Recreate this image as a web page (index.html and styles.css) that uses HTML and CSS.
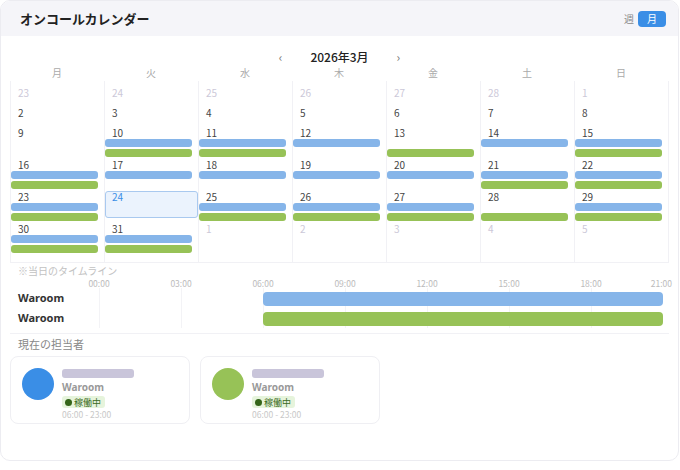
FILE: index.html
```html
<!DOCTYPE html>
<html lang="ja">
<head>
    <meta charset="UTF-8">
    <meta name="viewport" content="width=device-width, initial-scale=1.0">
    <title>オンコールカレンダー</title>
    <link rel="stylesheet" href="styles.css">
</head>
<body>
    <div class="panel">
        <div class="cabecera">
            <h1 class="titulo">オンコールカレンダー</h1>
            <div class="vista">
                <span class="vista-op">週</span>
                <span class="vista-op activa">月</span>
            </div>
        </div>

        <div class="mes-nav">
            <span class="flecha">‹</span>
            <span class="mes">2026年3月</span>
            <span class="flecha">›</span>
        </div>

        <div class="dias-semana">
            <span>月</span><span>火</span><span>水</span><span>木</span><span>金</span><span>土</span><span>日</span>
        </div>

        <div class="semanas">
            <div class="semana">
                <div class="dia fuera"><span class="num">23</span></div>
                <div class="dia fuera"><span class="num">24</span></div>
                <div class="dia fuera"><span class="num">25</span></div>
                <div class="dia fuera"><span class="num">26</span></div>
                <div class="dia fuera"><span class="num">27</span></div>
                <div class="dia fuera"><span class="num">28</span></div>
                <div class="dia fuera"><span class="num">1</span></div>
            </div>
            <div class="semana">
                <div class="dia"><span class="num">2</span></div>
                <div class="dia"><span class="num">3</span></div>
                <div class="dia"><span class="num">4</span></div>
                <div class="dia"><span class="num">5</span></div>
                <div class="dia"><span class="num">6</span></div>
                <div class="dia"><span class="num">7</span></div>
                <div class="dia"><span class="num">8</span></div>
            </div>
            <div class="semana">
                <div class="dia"><span class="num">9</span></div>
                <div class="dia"><span class="num">10</span><i class="barra azul"></i><i class="barra verde"></i></div>
                <div class="dia"><span class="num">11</span><i class="barra azul"></i><i class="barra verde"></i></div>
                <div class="dia"><span class="num">12</span><i class="barra azul"></i></div>
                <div class="dia"><span class="num">13</span><i class="barra vacia"></i><i class="barra verde"></i></div>
                <div class="dia"><span class="num">14</span><i class="barra azul"></i></div>
                <div class="dia"><span class="num">15</span><i class="barra azul"></i><i class="barra verde"></i></div>
            </div>
            <div class="semana">
                <div class="dia"><span class="num">16</span><i class="barra azul"></i><i class="barra verde"></i></div>
                <div class="dia"><span class="num">17</span><i class="barra azul"></i></div>
                <div class="dia"><span class="num">18</span><i class="barra azul"></i></div>
                <div class="dia"><span class="num">19</span><i class="barra azul"></i></div>
                <div class="dia"><span class="num">20</span><i class="barra azul"></i></div>
                <div class="dia"><span class="num">21</span><i class="barra azul"></i><i class="barra verde"></i></div>
                <div class="dia"><span class="num">22</span><i class="barra azul"></i><i class="barra verde"></i></div>
            </div>
            <div class="semana">
                <div class="dia"><span class="num">23</span><i class="barra azul"></i><i class="barra verde"></i></div>
                <div class="dia hoy"><span class="num">24</span></div>
                <div class="dia"><span class="num">25</span><i class="barra azul"></i><i class="barra verde"></i></div>
                <div class="dia"><span class="num">26</span><i class="barra azul"></i><i class="barra verde"></i></div>
                <div class="dia"><span class="num">27</span><i class="barra azul"></i><i class="barra verde"></i></div>
                <div class="dia"><span class="num">28</span><i class="barra vacia"></i><i class="barra verde"></i></div>
                <div class="dia"><span class="num">29</span><i class="barra azul"></i><i class="barra verde"></i></div>
            </div>
            <div class="semana">
                <div class="dia"><span class="num">30</span><i class="barra azul"></i><i class="barra verde"></i></div>
                <div class="dia"><span class="num">31</span><i class="barra azul"></i><i class="barra verde"></i></div>
                <div class="dia fuera"><span class="num">1</span></div>
                <div class="dia fuera"><span class="num">2</span></div>
                <div class="dia fuera"><span class="num">3</span></div>
                <div class="dia fuera"><span class="num">4</span></div>
                <div class="dia fuera"><span class="num">5</span></div>
            </div>
        </div>

        <div class="linea-tiempo">
            <div class="nota">※当日のタイムライン</div>
            <div class="fila eje">
                <div class="nombre"></div>
                <div class="pista">
                    <span class="hora" style="left: 0px">00:00</span>
                    <span class="hora" style="left: 82px">03:00</span>
                    <span class="hora" style="left: 164px">06:00</span>
                    <span class="hora" style="left: 246px">09:00</span>
                    <span class="hora" style="left: 328px">12:00</span>
                    <span class="hora" style="left: 410px">15:00</span>
                    <span class="hora" style="left: 492px">18:00</span>
                    <span class="hora fin" style="left: 573px">21:00</span>
                </div>
            </div>
            <div class="fila">
                <div class="nombre">Waroom</div>
                <div class="pista"><i class="turno azul" style="left: 164px; width: 400px"></i></div>
            </div>
            <div class="fila">
                <div class="nombre">Waroom</div>
                <div class="pista"><i class="turno verde" style="left: 164px; width: 400px"></i></div>
            </div>
        </div>

        <div class="responsables">
            <div class="subtitulo">現在の担当者</div>
            <div class="tarjetas">
                <div class="tarjeta">
                    <span class="avatar azul-fuerte"></span>
                    <div class="info">
                        <span class="oculto"></span>
                        <span class="equipo">Waroom</span>
                        <span class="estado"><i class="punto"></i>稼働中</span>
                        <span class="horario">06:00 - 23:00</span>
                    </div>
                </div>
                <div class="tarjeta">
                    <span class="avatar verde"></span>
                    <div class="info">
                        <span class="oculto"></span>
                        <span class="equipo">Waroom</span>
                        <span class="estado"><i class="punto"></i>稼働中</span>
                        <span class="horario">06:00 - 23:00</span>
                    </div>
                </div>
            </div>
        </div>
    </div>
</body>
</html>
```

FILE: styles.css
```css
body {
    margin: 0;
    background: #ffffff;
    font-family: "Noto Sans CJK JP", "Noto Sans", sans-serif;
    color: #333;
}
.panel {
    width: 679px;
    height: 461px;
    box-sizing: border-box;
    border: 1px solid #ececf1;
    border-radius: 10px;
    overflow: hidden;
    background: #fff;
}
.cabecera {
    height: 35px;
    background: #f5f5f9;
    display: flex;
    align-items: center;
    justify-content: space-between;
    padding: 0 12px 0 19px;
}
.titulo {
    margin: 0;
    font-size: 13px;
    font-weight: 700;
    color: #222;
}
.vista {
    display: flex;
    align-items: center;
    gap: 4px;
}
.vista-op {
    font-size: 10px;
    color: #888;
}
.vista-op.activa {
    width: 28px;
    height: 16px;
    line-height: 16px;
    text-align: center;
    border-radius: 4px;
    background: #3a8ee6;
    color: #fff;
}
.mes-nav {
    display: flex;
    justify-content: center;
    align-items: center;
    gap: 28px;
    height: 20px;
    margin-top: 10px;
}
.mes {
    font-size: 12px;
    font-weight: 500;
    color: #222;
}
.flecha {
    font-size: 12px;
    color: #777;
}
.dias-semana {
    display: grid;
    grid-template-columns: repeat(7, 94px);
    margin-left: 9px;
    height: 15px;
    line-height: 14px;
    font-size: 10px;
    color: #aaa;
    text-align: center;
}
.semanas {
    margin-left: 9px;
    width: 658px;
    padding: 4px 0 9px;
    border-right: 1px solid #f1f1f5;
    border-bottom: 1px solid #f1f1f5;
    background: linear-gradient(to right, #f1f1f5 1px, transparent 1px) 0 0 / 94px 100%;
}
.semana {
    display: grid;
    grid-template-columns: repeat(7, 94px);
}
.dia {
    position: relative;
    min-height: 20px;
    box-sizing: border-box;
    padding: 2px 6px 0 1px;
    display: flex;
    flex-direction: column;
    gap: 2px;
}
.num {
    position: relative;
    z-index: 1;
    height: 12px;
    line-height: 12px;
    font-size: 10px;
    padding-left: 7px;
    margin-bottom: -2px;
    color: #444;
}
.fuera .num {
    color: #ccc8d8;
}
.hoy::before {
    content: "";
    position: absolute;
    top: 2px;
    left: 1px;
    right: 0;
    height: 27px;
    box-sizing: border-box;
    border: 1px solid #a9c9ef;
    border-radius: 3px;
    background: #ebf3fd;
}
.hoy .num {
    color: #3a8ee6;
}
.barra {
    display: block;
    height: 8px;
    border-radius: 3px;
}
.azul {
    background: #86b5e9;
}
.verde {
    background: #97c257;
}
.vacia {
    background: transparent;
}
.linea-tiempo {
    margin-left: 9px;
    width: 659px;
    padding-bottom: 5px;
    border-bottom: 1px solid #f1f1f5;
}
.nota {
    height: 15px;
    line-height: 15px;
    padding-left: 8px;
    font-size: 10px;
    color: #c2c2c2;
}
.fila {
    display: flex;
    height: 20px;
}
.fila.eje {
    height: 10px;
}
.nombre {
    width: 89px;
    box-sizing: border-box;
    padding-left: 8px;
    line-height: 20px;
    font-size: 11px;
    font-weight: 700;
    color: #333;
    font-family: "Noto Sans", sans-serif;
}
.pista {
    position: relative;
    flex: 1;
    background: linear-gradient(to right, #f3f3f6 1px, transparent 1px) 0 0 / 82px 100%;
}
.hora {
    position: absolute;
    top: 0;
    transform: translateX(-50%);
    font-size: 8.5px;
    line-height: 10px;
    color: #bbb;
    background: #fff;
}
.hora.fin {
    transform: translateX(-100%);
}
.turno {
    position: absolute;
    top: 4px;
    height: 14px;
    border-radius: 4px;
}
.responsables {
    padding: 3px 9px 0;
}
.subtitulo {
    padding-left: 8px;
    font-size: 11px;
    line-height: 14px;
    color: #888;
}
.tarjetas {
    display: flex;
    gap: 10px;
    margin-top: 5px;
}
.tarjeta {
    width: 180px;
    height: 68px;
    box-sizing: border-box;
    border: 1px solid #efeff3;
    border-radius: 8px;
    padding: 11px 11px 0;
    display: flex;
    gap: 8px;
}
.avatar {
    width: 32px;
    height: 32px;
    border-radius: 50%;
    flex-shrink: 0;
}
.azul-fuerte {
    background: #3a8ee6;
}
.info {
    display: flex;
    flex-direction: column;
    align-items: flex-start;
    padding-top: 1px;
}
.info > * {
    flex-shrink: 0;
}
.oculto {
    width: 72px;
    height: 9px;
    border-radius: 3px;
    background: #c9c5da;
}
.equipo {
    margin-top: 3px;
    font-family: "Noto Sans", sans-serif;
    font-size: 10px;
    font-weight: 700;
    line-height: 12px;
    color: #999;
}
.estado {
    display: flex;
    align-items: center;
    gap: 2px;
    margin-top: 3px;
    height: 12px;
    padding: 0 4px 0 3px;
    border-radius: 3px;
    background: #e6f4dc;
    font-size: 9px;
    color: #3b6b1d;
}
.punto {
    width: 7px;
    height: 7px;
    border-radius: 50%;
    background: #35651a;
}
.horario {
    margin-top: 1px;
    font-size: 8.5px;
    line-height: 10px;
    color: #c8c8c8;
}
```
